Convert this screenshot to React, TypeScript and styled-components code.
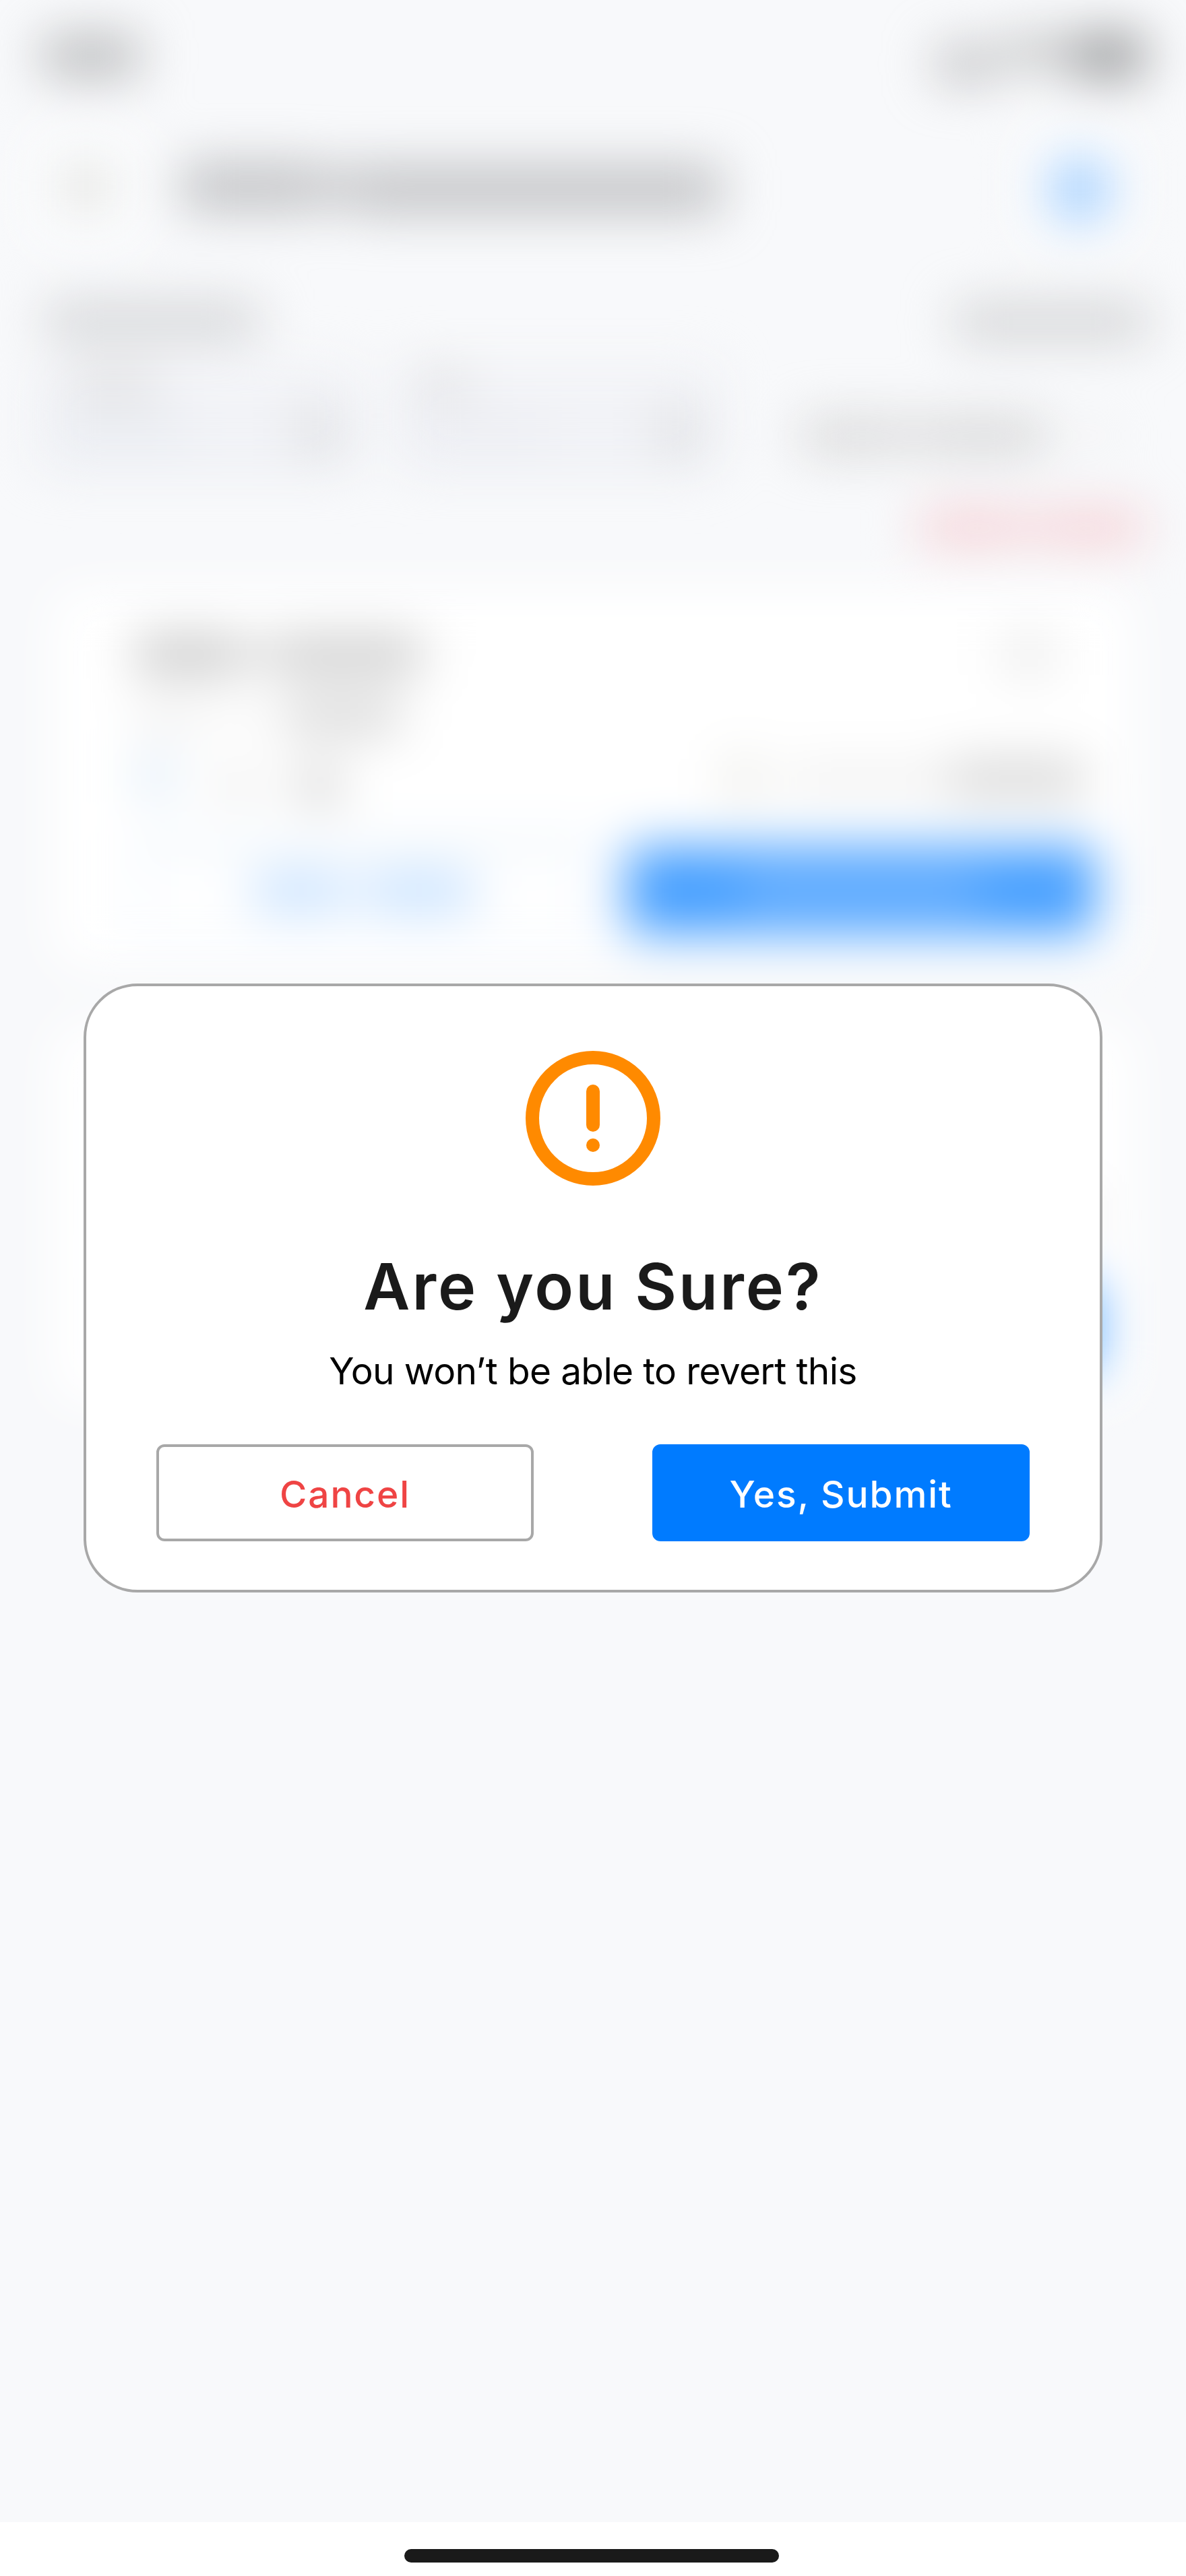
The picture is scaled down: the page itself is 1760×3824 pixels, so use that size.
import React from "react";
import styled, { createGlobalStyle } from "styled-components";

const GlobalStyle = createGlobalStyle`
  *, *::before, *::after { box-sizing: border-box; }
  body { margin: 0; background: #f8f9fb; font-family: Inter, "Liberation Sans", sans-serif; }
`;

const Screen = styled.main`
  position: relative;
  display: flex;
  flex-direction: column;
  width: 1760px;
  height: 3824px;
  overflow: hidden;
  background: #f8f9fb;
`;

/* The page behind the dialog, out of focus */
const Behind = styled.div`
  flex: 1;
  display: flex;
  flex-direction: column;
  overflow: hidden;
`;

const Blurred = styled.div`
  display: flex;
  flex-direction: column;
  filter: blur(37px);
`;

const Line = styled.div<{ $h: number; $align?: string; $pad?: string }>`
  display: flex;
  align-items: ${(p) => p.$align ?? "center"};
  height: ${(p) => p.$h}px;
  padding: ${(p) => p.$pad ?? "0"};
`;

const Smudge = styled.span<{ $w: number; $h: number; $c: string; $gap?: number; $r?: number; $drop?: number }>`
  flex: none;
  width: ${(p) => p.$w}px;
  height: ${(p) => p.$h}px;
  margin-left: ${(p) => p.$gap ?? 0}px;
  margin-top: ${(p) => p.$drop ?? 0}px;
  border-radius: ${(p) => p.$r ?? 8}px;
  background: ${(p) => p.$c};
  opacity: 0.82;
`;

const IconTile = styled.div<{ $gap?: number }>`
  display: flex;
  align-items: center;
  justify-content: center;
  flex: none;
  width: 176px;
  height: 176px;
  margin-left: ${(p) => p.$gap ?? 0}px;
  border-radius: 40px;
  background: #fbfcfd;
`;

const DateField = styled.div`
  display: flex;
  flex-direction: column;
  flex: none;
  width: 470px;
  height: 150px;
  padding: 0 24px;
  border: 6px solid #dcdfe8;
  border-top-color: #f0f1f4;
  border-bottom-width: 10px;
  border-radius: 16px;
  background: #f2f3f7;
`;

const FieldBody = styled.div`
  display: flex;
  align-items: center;
  justify-content: space-between;
  padding-top: 12px;
`;

const FieldRow = styled.div`
  display: flex;
  gap: 64px;
  height: 166px;
  padding: 0 0 0 60px;
`;

const Card = styled.section`
  display: flex;
  flex-direction: column;
  width: 1604px;
  height: 562px;
  margin: 0 0 85px 78px;
  padding: 58px 56px 0 120px;
  border-radius: 32px;
  background: #ffffff;
`;

const CardActions = styled.div`
  display: flex;
  justify-content: space-between;
  margin-top: 36px;
`;

const Ghost = styled.div`
  display: flex;
  align-items: center;
  justify-content: center;
  gap: 26px;
  width: 682px;
  height: 138px;
  border: 4px solid #c8dff7;
  border-top-width: 8px;
  border-radius: 12px;
`;

const Solid = styled.div`
  display: flex;
  align-items: center;
  justify-content: center;
  width: 696px;
  height: 132px;
  margin-top: 4px;
  border-radius: 12px;
  background: #48a0ff;
`;

const HomeBar = styled.footer`
  display: flex;
  justify-content: center;
  height: 80px;
  padding: 40px 4px 0 0;
  background: #ffffff;
`;

const HomeHandle = styled.div`
  width: 556px;
  height: 20px;
  border-radius: 10px;
  background: #1a1a1a;
`;

const Dialog = styled.div`
  position: absolute;
  top: 1460px;
  left: 124px;
  display: flex;
  flex-direction: column;
  align-items: center;
  width: 1512px;
  height: 904px;
  padding: 96px 104px 72px;
  border: 4px solid #a8a8a8;
  border-radius: 80px;
  background: #ffffff;
`;

const Title = styled.h1`
  margin: 92px 0 0;
  font-size: 95px;
  line-height: 116px;
  font-weight: 600;
  letter-spacing: 3px;
  white-space: nowrap;
  color: #1a1a1a;
`;

const Message = styled.p`
  margin: 29px 0 0;
  font-size: 55px;
  line-height: 76px;
  font-weight: 400;
  letter-spacing: -0.65px;
  white-space: nowrap;
  color: #000000;
`;

const Actions = styled.div`
  display: flex;
  justify-content: space-between;
  width: 100%;
  margin-top: auto;
`;

const Button = styled.button<{ $primary?: boolean }>`
  display: flex;
  align-items: center;
  justify-content: center;
  width: 560px;
  height: 144px;
  padding: 4px 0 0;
  border: 4px solid ${(p) => (p.$primary ? "#007bff" : "#a8a8a8")};
  border-radius: 12px;
  background: ${(p) => (p.$primary ? "#007bff" : "#ffffff")};
  color: ${(p) => (p.$primary ? "#ffffff" : "#ef4444")};
  font-family: inherit;
  font-size: 55px;
  font-weight: 500;
  letter-spacing: 1.9px;
`;

function WarningIcon() {
  return (
    <svg width="200" height="200" viewBox="0 0 200 200" fill="none">
      <circle cx="100" cy="100" r="90" stroke="#ff8a00" strokeWidth="20" />
      <rect x="90" y="50" width="20" height="70" rx="10" fill="#ff8a00" />
      <circle cx="100" cy="140" r="10" fill="#ff8a00" />
    </svg>
  );
}

function InspectionCard() {
  return (
    <Card>
      <Line $h={80}>
        <Smudge $w={150} $h={54} $c="#bababa" $gap={4} />
        <Smudge $w={60} $h={36} $c="#cfcfcf" />
        <Smudge $w={215} $h={54} $c="#bebebe" />
        <Smudge $w={80} $h={66} $c="#e9e9e9" $gap={860} />
      </Line>
      <Line $h={104}>
        <Smudge $w={100} $h={34} $c="#e6e6e6" $gap={2} />
        <Smudge $w={60} $h={30} $c="#ececec" $gap={20} />
        <Smudge $w={175} $h={50} $c="#cccccc" $gap={40} />
      </Line>
      <Line $h={100}>
        <Smudge $w={58} $h={70} $c="#dceaf8" $gap={4} $drop={-26} />
        <Smudge $w={70} $h={44} $c="#e6e6e6" $gap={58} />
        <Smudge $w={66} $h={56} $c="#cacaca" $gap={52} />
        <Smudge $w={56} $h={64} $c="#e6e6e2" $gap={568} $drop={-20} />
        <Smudge $w={230} $h={38} $c="#e9e9e9" $gap={36} $drop={-20} />
        <Smudge $w={204} $h={50} $c="#c8c8c8" $gap={10} $drop={-20} />
      </Line>
      <CardActions>
        <Ghost>
          <Smudge $w={140} $h={56} $c="#b9dbff" />
          <Smudge $w={160} $h={58} $c="#b9dbff" />
        </Ghost>
        <Solid>
          <Smudge $w={350} $h={50} $c="#7ab8ff" />
        </Solid>
      </CardActions>
    </Card>
  );
}

export default function App() {
  return (
    <Screen>
      <GlobalStyle />
      <Behind>
        <Blurred>
          <Line $h={182} $pad="0 0 16px">
            <Smudge $w={146} $h={62} $c="#acadaf" $gap={62} />
            <Smudge $w={90} $h={54} $c="#b4b5b7" $gap={1180} $drop={24} />
            <Smudge $w={100} $h={50} $c="#b8b9ba" $gap={10} $drop={-12} />
            <Smudge $w={108} $h={66} $c="#818284" $gap={4} $r={16} />
          </Line>
          <Line $h={190}>
            <IconTile $gap={40}>
              <Smudge $w={70} $h={64} $c="#dadad7" />
            </IconTile>
            <Smudge $w={206} $h={72} $c="#b6b7b9" $gap={52} />
            <Smudge $w={50} $h={60} $c="#bfc0c2" />
            <Smudge $w={548} $h={72} $c="#b6b7b9" $drop={8} />
            <IconTile $gap={442}>
              <Smudge $w={92} $h={96} $c="#8fc5ff" $r={43} $drop={10} />
            </IconTile>
          </Line>
          <Line $h={170} $pad="38px 0 0">
            <Smudge $w={320} $h={54} $c="#cbccce" $gap={66} />
            <Smudge $w={290} $h={54} $c="#c9cacc" $gap={1030} $drop={4} />
          </Line>
          <FieldRow>
            <DateField>
              <Smudge $w={130} $h={46} $c="#dadadc" $gap={14} />
              <FieldBody>
                <Smudge $w={190} $h={46} $c="#e8ecf0" />
                <Smudge $w={56} $h={66} $c="#d8d9db" />
              </FieldBody>
            </DateField>
            <DateField>
              <Smudge $w={70} $h={46} $c="#dadadc" />
              <FieldBody>
                <Smudge $w={190} $h={46} $c="#ebedf2" />
                <Smudge $w={56} $h={66} $c="#d8d9db" />
              </FieldBody>
            </DateField>
            <Line $h={210} $align="center">
              <Smudge $w={150} $h={54} $c="#d2d2d2" $gap={58} />
              <Smudge $w={40} $h={50} $c="#dadada" />
              <Smudge $w={180} $h={54} $c="#cfcfcf" />
              <Smudge $w={50} $h={30} $c="#f0f0ef" $gap={50} />
            </Line>
          </FieldRow>
          <Line $h={166} $pad="0 0 16px">
            <Smudge $w={150} $h={54} $c="#f5c9ce" $gap={1364} />
            <Smudge $w={30} $h={44} $c="#f5d5d9" />
            <Smudge $w={154} $h={54} $c="#f5c9ce" />
          </Line>
          <InspectionCard />
          <InspectionCard />
        </Blurred>
      </Behind>
      <HomeBar>
        <HomeHandle />
      </HomeBar>
      <Dialog role="dialog" aria-modal="true">
        <WarningIcon />
        <Title>Are you Sure?</Title>
        <Message>You won’t be able to revert this</Message>
        <Actions>
          <Button>Cancel</Button>
          <Button $primary>Yes, Submit</Button>
        </Actions>
      </Dialog>
    </Screen>
  );
}
